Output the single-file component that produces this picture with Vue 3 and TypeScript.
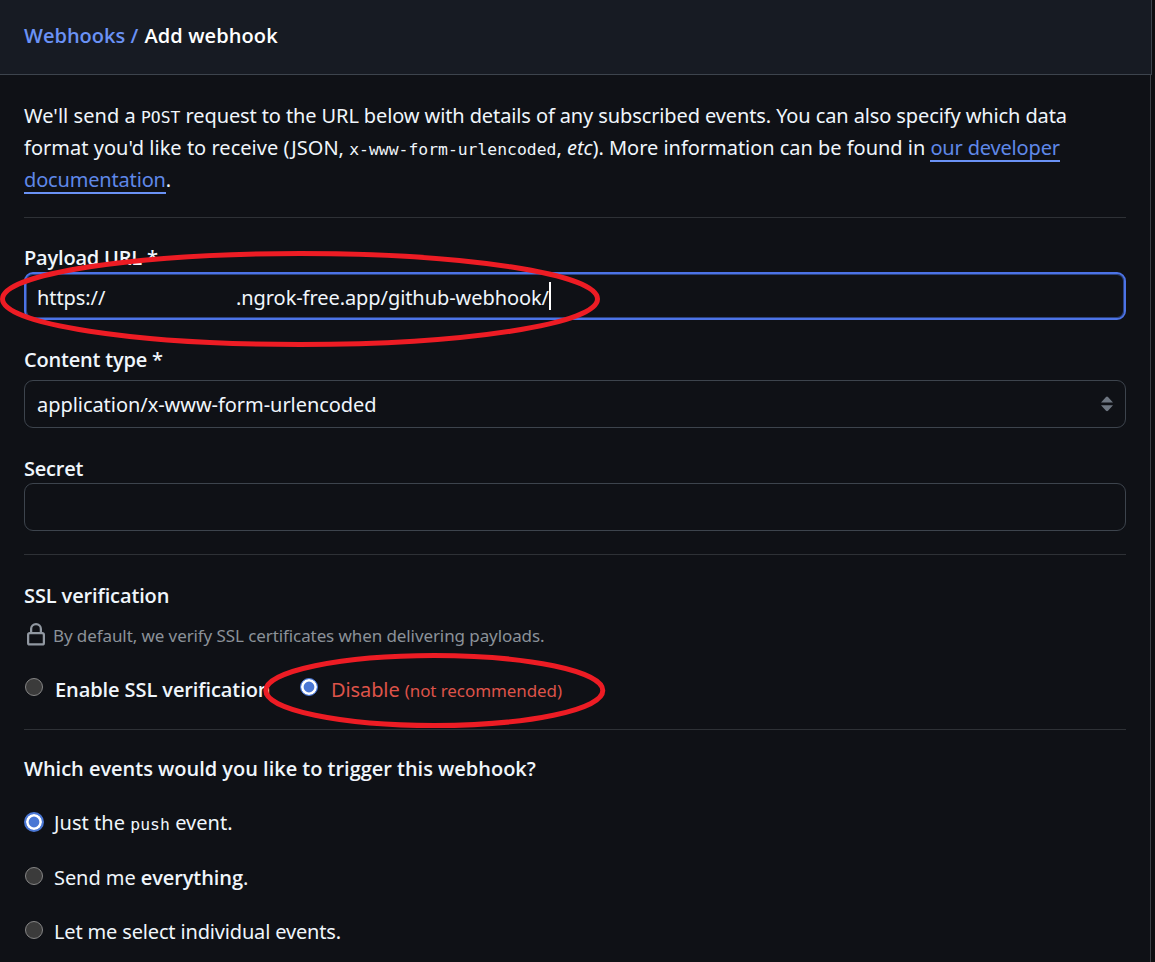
<template>
  <div class="page">
    <header class="subhead">
      <a class="crumb">Webhooks /</a> <span class="current">Add webhook</span>
    </header>
    <main class="content">
      <p class="intro">
        <span class="line"><span class="t1">We'll send a </span><code>POST</code><span class="t2"> request to the URL below with details of any subscribed events. You can also specify which data</span></span>
        <span class="line"><span class="t3">format you'd like to receive (JSON, </span><code>x-www-form-urlencoded</code><span class="t4">, <em>etc</em>). More information can be found in </span><a class="link l1">our developer</a></span>
        <span class="line"><a class="link l2">documentation</a>.</span>
      </p>

      <section class="fields">
        <label class="label payload">Payload URL *</label>
        <div class="input focused">
          <span class="scheme">https://</span>
          <span class="host">.ngrok-free.app/github-webhook/</span>
          <span class="caret"></span>
        </div>
        <label class="label ctype">Content type *</label>
        <div class="input select">
          <span class="value">{{ contentType }}</span>
          <svg class="arrows" width="12" height="16" viewBox="0 0 12 16">
            <path d="M0 6.6 5 .9Q6 0 7 .9L12 6.6ZM0 9.2H12L7 14.7Q6 15.6 5 14.7Z" fill="#6e7681" />
          </svg>
        </div>
        <label class="label secret">Secret</label>
        <div class="input"></div>
      </section>

      <section class="ssl">
        <h3 class="ssl-title">SSL verification</h3>
        <div class="help">
          <svg class="lock" width="24" height="24" viewBox="0 0 16 16">
            <path
              d="M4 4a4 4 0 0 1 8 0v2h.25c.966 0 1.75.784 1.75 1.75v5.5A1.75 1.75 0 0 1 12.25 15h-8.5A1.75 1.75 0 0 1 2 13.25v-5.5C2 6.784 2.784 6 3.75 6H4Zm8.25 3.5h-8.5a.25.25 0 0 0-.25.25v5.5c0 .138.112.25.25.25h8.5a.25.25 0 0 0 .25-.25v-5.5a.25.25 0 0 0-.25-.25ZM10.5 6V4a2.5 2.5 0 1 0-5 0v2Z"
              fill="#9198a1"
            />
          </svg>
          <span>By default, we verify SSL certificates when delivering payloads.</span>
        </div>
        <div class="choices">
          <div class="choice enable" @click="sslEnabled = true">
            <i class="radio" :class="{ checked: sslEnabled }"></i>
            <b>Enable SSL verification</b>
          </div>
          <div class="choice disable" @click="sslEnabled = false">
            <i class="radio" :class="{ checked: !sslEnabled }"></i>
            <span class="danger">Disable <small>(not recommended)</small></span>
          </div>
        </div>
      </section>

      <section class="events">
        <h3 class="events-title">Which events would you like to trigger this webhook?</h3>
        <div class="choice just" @click="selected = 'push'">
          <i class="radio" :class="{ checked: selected === 'push' }"></i>
          <span>Just the <code>push</code> event.</span>
        </div>
        <div class="choice all" @click="selected = 'all'">
          <i class="radio" :class="{ checked: selected === 'all' }"></i>
          <span>Send me <b>everything</b>.</span>
        </div>
        <div class="choice some" @click="selected = 'some'">
          <i class="radio" :class="{ checked: selected === 'some' }"></i>
          <span>Let me select individual events.</span>
        </div>
      </section>
    </main>

    <!-- red marker rings -->
    <svg class="rings" width="1155" height="962" viewBox="0 0 1155 962">
      <ellipse cx="300" cy="299" rx="297.5" ry="45.5" />
      <ellipse cx="434.3" cy="690.5" rx="168.5" ry="35" />
    </svg>
  </div>
</template>

<script setup lang="ts">
import { ref } from 'vue';

type EventChoice = 'push' | 'all' | 'some';

const contentType = ref<string>('application/x-www-form-urlencoded');
const sslEnabled = ref<boolean>(false);
const selected = ref<EventChoice>('push');
</script>

<style>
body {
  margin: 0;
  background: #0f0f13;
}
</style>

<style scoped>
.page {
  position: relative;
  width: 1155px;
  height: 962px;
  overflow: hidden;
  background: #0e0e11;
  color: #f0f6fc;
  font-family: "Noto Sans", "Open Sans", sans-serif;
  font-size: 20px;
  line-height: 30px;
  white-space: nowrap;
}

.subhead {
  box-sizing: border-box;
  width: 1152px;
  height: 75px;
  padding: 21px 24px 0;
  background: #171b23;
  border-right: 1px solid #3d444d;
  border-bottom: 1px solid #3d444d;
  font-family: "Open Sans", sans-serif;
  font-weight: 600;
}

.crumb {
  color: #6a92f5;
}

.current {
  margin-left: 1px;
  color: #fff;
  letter-spacing: 0.1px;
}

.content {
  box-sizing: border-box;
  width: 1151px;
  height: 887px;
  padding: 25px 24px 0;
  background: #0f1116;
  border-right: 1px solid #3d4046;
}

.intro {
  margin: 0;
  height: 117px;
  line-height: 32px;
  border-bottom: 1px solid #2e3136;
}

.line {
  display: block;
  white-space: pre;
}

.t1 {
  letter-spacing: 0.04px;
}

.t2 {
  letter-spacing: -0.11px;
}

.t3 {
  letter-spacing: 0.02px;
}

.t4 {
  letter-spacing: -0.03px;
}

code {
  font-family: "DejaVu Sans Mono", monospace;
  font-size: 16.4px;
  line-height: 1;
}

.link {
  display: inline-block;
  box-sizing: border-box;
  height: 30px;
  color: #5f88e8;
  border-bottom: 2px solid #6a92f5;
  letter-spacing: -0.17px;
}

.fields {
  height: 336px;
  border-bottom: 1px solid #2e3136;
}

.label {
  display: block;
  font-family: "Open Sans", sans-serif;
  font-weight: 600;
  letter-spacing: -0.2px;
}

.payload {
  padding-top: 25px;
  margin-bottom: -1px;
}

.ctype {
  padding: 25px 0 5px;
}

.secret {
  padding-top: 26px;
  margin-bottom: -1px;
}

.input {
  display: flex;
  align-items: center;
  box-sizing: border-box;
  height: 48px;
  padding: 0 12px;
  border: 1px solid #3d444d;
  border-radius: 9px;
}

.focused {
  padding: 0 11px;
  border: 2px solid #4c73e6;
  box-shadow: inset 0 0 0 1px #2b437f;
}

.scheme {
  width: 199px;
  padding-top: 3px;
  letter-spacing: -0.08px;
}

.host {
  padding-top: 3px;
  letter-spacing: -0.07px;
}

.caret {
  width: 2px;
  height: 28px;
  background: #fff;
}

.select {
  justify-content: space-between;
}

.select .value {
  padding-top: 2px;
  letter-spacing: -0.05px;
}

h3 {
  margin: 0;
  font-family: "Open Sans", sans-serif;
  font-size: 20px;
  font-weight: 600;
}

.ssl {
  height: 148px;
  padding-top: 26px;
  border-bottom: 1px solid #2e3136;
}

.ssl-title {
  letter-spacing: -0.12px;
}

.help {
  display: flex;
  align-items: center;
  height: 30px;
  margin-top: 9px;
  color: #8b9199;
  font-size: 17px;
  letter-spacing: -0.09px;
}

.help span {
  padding-top: 1px;
}

.lock {
  margin-right: 5px;
}

.choices {
  display: flex;
  margin-top: 25px;
}

.choice {
  display: flex;
  height: 30px;
}

.choice b {
  font-family: "Open Sans", sans-serif;
  font-weight: 600;
  letter-spacing: -0.09px;
}

.enable {
  width: 275px;
}

.radio {
  flex: none;
  box-sizing: border-box;
  width: 18px;
  height: 18px;
  margin: 3px 12px 0 1px;
  border: 1px solid #858585;
  border-radius: 50%;
  background: #3b3b3b;
}

.radio.checked {
  border: 1px solid #4a77d4;
  background: #4a77d4;
  box-shadow: inset 0 0 0 2.6px #fff;
}

.disable .radio {
  margin-right: 13px;
}

.danger {
  color: #dd5349;
  letter-spacing: -0.1px;
}

.danger small {
  font-size: 17px;
  letter-spacing: -0.08px;
}

.events {
  padding-top: 24px;
}

.events-title {
  letter-spacing: -0.02px;
}

.events .radio {
  margin: 4px 11px 0 1px;
}

.events .radio.checked {
  width: 20px;
  height: 20px;
  margin: 4px 10px 0 0;
  border-width: 2px;
}

.just {
  margin-top: 24px;
  letter-spacing: 0.04px;
}

.all {
  margin-top: 25px;
  letter-spacing: -0.07px;
}

.some {
  margin-top: 24px;
  letter-spacing: -0.16px;
}

.rings {
  position: absolute;
  top: 0;
  left: 0;
  pointer-events: none;
}

.rings ellipse {
  fill: none;
  stroke: #ed1c24;
  stroke-width: 5;
}
</style>
